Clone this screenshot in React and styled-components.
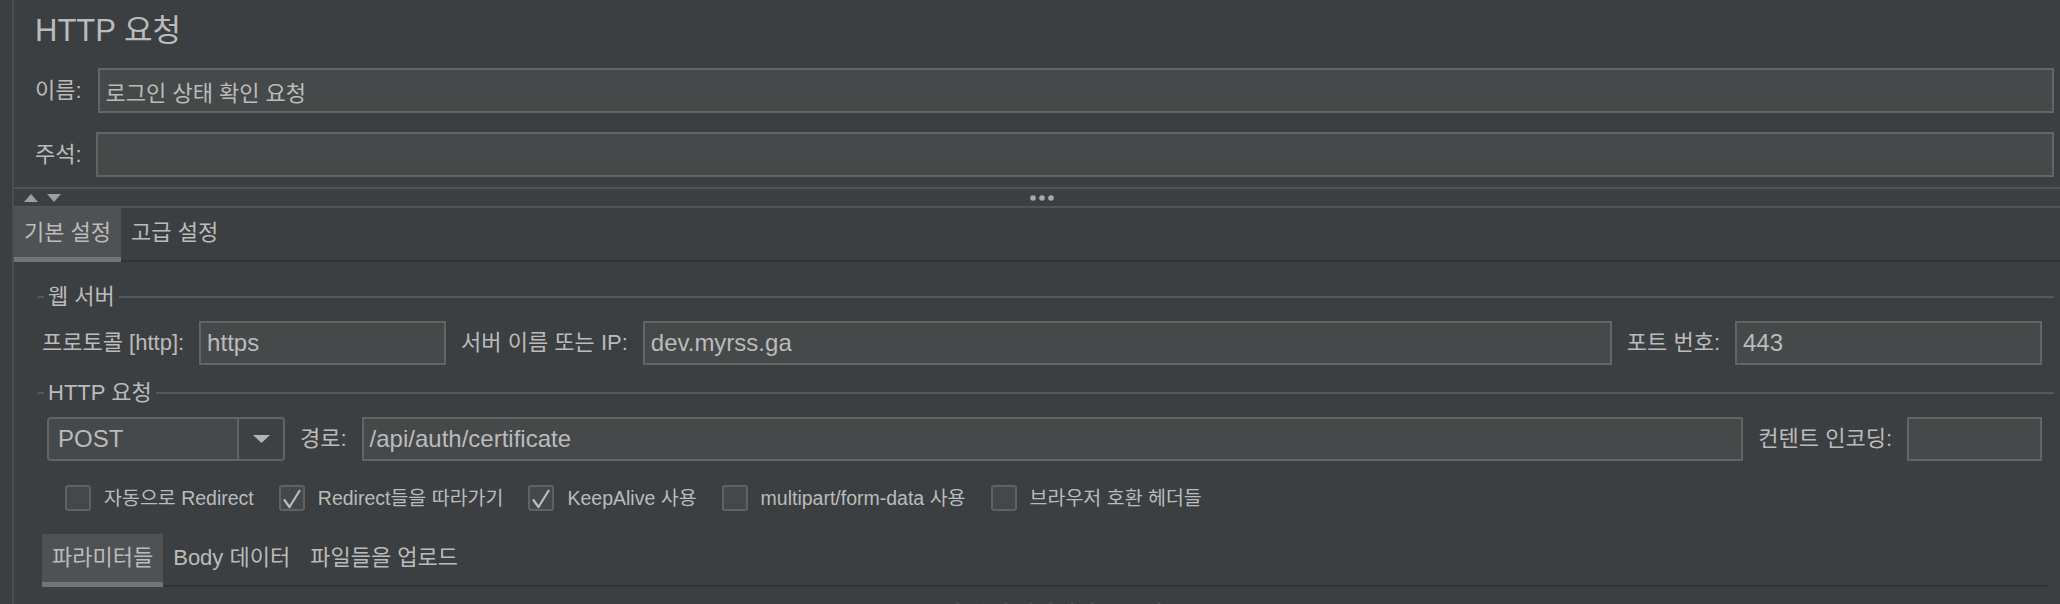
import React from "react";
import styled, { createGlobalStyle } from "styled-components";

const GlobalStyle = createGlobalStyle`
  body {
    margin: 0;
    background: #3c3f41;
    color: #bbbbbb;
    font-family: "Liberation Sans", "Noto Sans CJK KR", sans-serif;
  }
`;

const Window = styled.div`
  width: 2060px;
  height: 604px;
  overflow: hidden;
  box-sizing: border-box;
  padding-left: 12px;
  background: #3c3f41;
`;

/* height 고정하면 flex가 자식들을 줄여버림. 그래서 높이는 내용대로 */
const Panel = styled.div`
  min-height: 604px;
  border-left: 2px solid #4b4e50;
  display: flex;
  flex-direction: column;
  & > * {
    flex-shrink: 0;
  }
`;

const Header = styled.div`
  padding: 13px 6px 0 21px;
  display: flex;
  flex-direction: column;
  gap: 19px;
`;

const Title = styled.h1`
  margin: 0;
  font-size: 31px;
  line-height: 36px;
  font-weight: normal;
`;

const Row = styled.div`
  display: flex;
  align-items: center;
  gap: ${(props) => props.$gap || 15}px;
`;

const Label = styled.span`
  font-size: 22px;
  line-height: 24px;
  white-space: nowrap;
`;

const Field = styled.div`
  box-sizing: border-box;
  height: ${(props) => props.$height || 44}px;
  width: ${(props) => (props.$width ? `${props.$width}px` : "auto")};
  flex: ${(props) => (props.$width ? "none" : 1)};
  border: 2px solid #646464;
  background: #45494a;
  padding-left: 6px;
  display: flex;
  align-items: center;
  font-size: ${(props) => props.$size || 24}px;
  white-space: nowrap;
`;

/* split pane divider: 위아래 화살표 + 가운데 점 3개 */
const SplitBar = styled.div`
  margin-top: 10px;
  box-sizing: border-box;
  height: 21px;
  border-top: 2px solid #515355;
  border-bottom: 2px solid #515355;
  display: grid;
  grid-template-columns: 1fr auto 1fr;
  align-items: center;
  padding-left: 10px;
`;

const Arrows = styled.div`
  display: flex;
  gap: 9px;
`;

const TabStrip = styled.div`
  display: flex;
  height: ${(props) => props.$height}px;
  box-shadow: inset 0 -2px 0 #313335;
`;

const Tab = styled.div`
  padding: 0 10px;
  display: flex;
  align-items: center;
  font-size: 22px;
  line-height: 24px;
  white-space: nowrap;
  background: ${(props) => (props.$active ? "#4e5254" : "transparent")};
  border-bottom: 5px solid
    ${(props) => (props.$active ? "#70757a" : "transparent")};
`;

const TabBody = styled.div`
  padding: 23px 6px 0 24px;
  display: flex;
  flex-direction: column;
`;

const Group = styled.section`
  display: flex;
  flex-direction: column;
  gap: 12px;
  margin-bottom: ${(props) => props.$after || 0}px;
`;

const GroupHead = styled.div`
  height: 24px;
  display: flex;
  align-items: center;
  gap: 4px;
  font-size: 22px;
  line-height: 24px;
  &::before {
    content: "";
    width: 6px;
    border-top: 2px solid #56595b;
  }
  &::after {
    content: "";
    flex: 1;
    border-top: 2px solid #56595b;
  }
`;

const GroupBody = styled.div`
  padding: 0 12px 0 4px;
  display: flex;
  flex-direction: column;
`;

const Combo = styled.div`
  box-sizing: border-box;
  margin-left: 5px;
  width: 238px;
  height: 44px;
  border: 2px solid #646464;
  border-radius: 4px;
  overflow: hidden;
  display: flex;
`;

const ComboValue = styled.div`
  flex: 1;
  background: #46494b;
  padding-left: 9px;
  display: flex;
  align-items: center;
  font-size: 24px;
`;

const ComboButton = styled.div`
  width: 44px;
  background: #3e4143;
  border-left: 2px solid #646464;
  display: flex;
  align-items: center;
  justify-content: center;
`;

const Checks = styled.div`
  margin-top: 24px;
  padding-left: 23px;
  display: flex;
  align-items: center;
  gap: 25px;
`;

const CheckItem = styled.label`
  display: flex;
  align-items: center;
  gap: 13px;
  font-size: 19.5px;
  line-height: 22px;
  white-space: nowrap;
`;

const Box = styled.span`
  box-sizing: border-box;
  width: 26px;
  height: 26px;
  border: 2px solid #5f6264;
  border-radius: 3px;
  background: #43494a;
  display: grid;
  place-items: center;
`;

const SubTabs = styled.div`
  margin: 23px 5px 0 4px;
`;

const Hint = styled.div`
  margin-top: 16px;
  text-align: center;
  font-size: 22px;
  line-height: 24px;
`;

const checkOptions = [
  { label: "자동으로 Redirect", checked: false },
  { label: "Redirect들을 따라가기", checked: true },
  { label: "KeepAlive 사용", checked: true },
  { label: "multipart/form-data 사용", checked: false },
  { label: "브라우저 호환 헤더들", checked: false },
];

const Check = ({ label, checked }) => (
  <CheckItem>
    <Box>
      {checked && (
        <svg width="22" height="22" viewBox="0 0 22 22">
          <path
            d="M3 12.5 L8.5 20 L19 3"
            fill="none"
            stroke="#bbbbbb"
            strokeWidth="2.2"
            strokeLinejoin="round"
          />
        </svg>
      )}
    </Box>
    {label}
  </CheckItem>
);

const App = () => {
  return (
    <Window>
      <GlobalStyle />
      <Panel>
        <Header>
          <Title>HTTP 요청</Title>
          <Row $gap={16}>
            <Label>이름:</Label>
            <Field $height={45} $size={22}>
              로그인 상태 확인 요청
            </Field>
          </Row>
          <Row $gap={14}>
            <Label>주석:</Label>
            <Field $height={45} />
          </Row>
        </Header>

        <SplitBar>
          <Arrows>
            <svg width="14" height="8" viewBox="0 0 14 8">
              <path d="M7 0 L14 8 L0 8 Z" fill="#9d9d9d" />
            </svg>
            <svg width="14" height="8" viewBox="0 0 14 8">
              <path d="M0 0 L14 0 L7 8 Z" fill="#9d9d9d" />
            </svg>
          </Arrows>
          <svg width="24" height="6" viewBox="0 0 24 6">
            <circle cx="3" cy="3" r="2.8" fill="#a8a8a8" />
            <circle cx="12" cy="3" r="2.8" fill="#a8a8a8" />
            <circle cx="21" cy="3" r="2.8" fill="#a8a8a8" />
          </svg>
          <span />
        </SplitBar>

        <TabStrip $height={54}>
          <Tab $active>기본 설정</Tab>
          <Tab>고급 설정</Tab>
        </TabStrip>

        <TabBody>
          <Group $after={16}>
            <GroupHead>웹 서버</GroupHead>
            <GroupBody>
              <Row>
                <Label>프로토콜 [http]:</Label>
                <Field $width={247}>https</Field>
                <Label>서버 이름 또는 IP:</Label>
                <Field>dev.myrss.ga</Field>
                <Label>포트 번호:</Label>
                <Field $width={307}>443</Field>
              </Row>
            </GroupBody>
          </Group>

          <Group>
            <GroupHead>HTTP 요청</GroupHead>
            <GroupBody>
              <Row>
                <Combo>
                  <ComboValue>POST</ComboValue>
                  <ComboButton>
                    <svg width="17" height="8" viewBox="0 0 17 8">
                      <path d="M0 0 H17 L8.5 8 Z" fill="#b4b4b4" />
                    </svg>
                  </ComboButton>
                </Combo>
                <Label>경로:</Label>
                <Field>/api/auth/certificate</Field>
                <Label>컨텐트 인코딩:</Label>
                <Field $width={135} />
              </Row>
              <Checks>
                {checkOptions.map((option) => (
                  <Check key={option.label} {...option} />
                ))}
              </Checks>
            </GroupBody>
          </Group>

          <SubTabs>
            <TabStrip $height={53}>
              <Tab $active>파라미터들</Tab>
              <Tab>Body 데이터</Tab>
              <Tab>파일들을 업로드</Tab>
            </TabStrip>
            <Hint>요청과 함께 파라미터들을 전송:</Hint>
          </SubTabs>
        </TabBody>
      </Panel>
    </Window>
  );
};

export default App;
